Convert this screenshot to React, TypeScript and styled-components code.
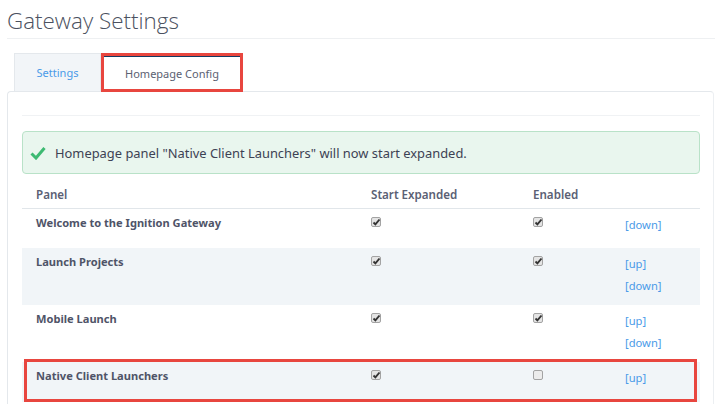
import React from "react";
import styled, { createGlobalStyle } from "styled-components";

const GlobalStyle = createGlobalStyle`
  html, body {
    margin: 0;
    padding: 0;
    background: #fff;
    overflow: hidden;
  }
  body {
    font-family: "Noto Sans", "Open Sans", sans-serif;
    font-size: 12px;
    color: #4f5468;
  }
`;

const Page = styled.div`
  position: relative;
  width: 715px;
  height: 404px;
  overflow: hidden;
  padding-left: 7px;
  box-sizing: border-box;
`;

const Title = styled.h1`
  margin: 0;
  height: 39px;
  padding-top: 6px;
  box-sizing: border-box;
  border-bottom: 1px solid #eef0f2;
  font-size: 22.4px;
  line-height: 29px;
  font-weight: 300;
  font-family: "Open Sans", sans-serif;
  color: #4b5160;
`;

const Tabs = styled.div`
  display: flex;
  margin: 14px 0 0 7px;
  height: 39px;
`;

const Tab = styled.div<{ $active?: boolean }>`
  display: flex;
  align-items: center;
  justify-content: center;
  box-sizing: border-box;
  margin-top: ${(p) => (p.$active ? "3px" : "0")};
  padding-bottom: ${(p) => (p.$active ? "3px" : "0")};
  height: ${(p) => (p.$active ? "36px" : "38px")};
  width: ${(p) => (p.$active ? "142px" : "87px")};
  font-size: 11px;
  color: ${(p) => (p.$active ? "#5b6172" : "#4a9ae8")};
  background: ${(p) => (p.$active ? "#fff" : "#f2f5f8")};
  border: 1px solid #e4e8ec;
  border-bottom: none;
  border-top: ${(p) => (p.$active ? "1px solid #123a63" : "1px solid #e4e8ec")};
  position: relative;
  z-index: 1;
`;

const Panel = styled.div`
  margin-top: -1px;
  width: 707px;
  height: 330px;
  box-sizing: border-box;
  padding: 23px 13px 0 14px;
  border: 1px solid #e4e8ec;
  border-right-color: #eceff2;
  border-radius: 4px 4px 0 0;
`;

const Rule = styled.div`
  border-top: 1px solid #f0f2f4;
  margin-bottom: 15px;
`;

const Alert = styled.div`
  display: flex;
  align-items: center;
  gap: 9px;
  height: 43px;
  box-sizing: border-box;
  padding-left: 7px;
  background: #e9f6ee;
  border: 1px solid #b9e2c8;
  border-radius: 4px;
  font-size: 12.9px;
  color: #3d4254;
`;

const Table = styled.table`
  width: 678px;
  margin-top: 12px;
  border-collapse: collapse;
  table-layout: fixed;
`;

const Head = styled.th<{ $w: number }>`
  width: ${(p) => p.$w}px;
  height: 22px;
  padding: 0 0 0 14px;
  box-sizing: border-box;
  text-align: left;
  vertical-align: top;
  font-size: 11.6px;
  line-height: 17px;
  font-weight: 600;
  color: #5a6074;
  border-bottom: 1px solid #e1e6ea;
`;

const Row = styled.tr<{ $shaded?: boolean; $h: number }>`
  height: ${(p) => p.$h}px;
  background: ${(p) => (p.$shaded ? "#f1f5f8" : "#fff")};
`;

const Cell = styled.td`
  padding: 5px 0 0 14px;
  vertical-align: top;
`;

const Name = styled.span`
  font-size: 11.1px;
  line-height: 17px;
  font-weight: 700;
  color: #4f5468;
`;

const MoveLink = styled.a`
  display: block;
  width: fit-content;
  font-size: 11.2px;
  line-height: 22px;
  color: #4a9ae8;
`;

const Check = styled.span<{ $on?: boolean }>`
  display: block;
  width: 10px;
  height: 10px;
  box-sizing: border-box;
  margin-top: 3px;
  border: 1px solid #a3a3a3;
  border-radius: 2px;
  background: ${(p) => (p.$on ? "#e4e4e4" : "#ececec")};
  position: relative;

  svg {
    position: absolute;
    left: 0;
    top: -1px;
  }
`;

const Highlight = styled.div<{ $x: number; $y: number; $w: number; $h: number }>`
  position: absolute;
  left: ${(p) => p.$x}px;
  top: ${(p) => p.$y}px;
  width: ${(p) => p.$w}px;
  height: ${(p) => p.$h}px;
  box-sizing: border-box;
  border: 3px solid #e8463f;
  z-index: 2;
`;

const CheckBox = ({ on }: { on?: boolean }) => (
  <Check $on={on}>
    {on && (
      <svg width="9" height="10" viewBox="0 0 9 10">
        <path d="M1.5 5.5 L3.4 7.4 L7.5 2.5" fill="none" stroke="#333" strokeWidth="1.9" />
      </svg>
    )}
  </Check>
);

const rows = [
  { name: "Welcome to the Ignition Gateway", on: true, links: ["[down]"], h: 40 },
  { name: "Launch Projects", on: true, links: ["[up]", "[down]"], h: 57, shaded: true },
  { name: "Mobile Launch", on: true, links: ["[up]", "[down]"], h: 57 },
  { name: "Native Client Launchers", on: false, links: ["[up]"], h: 40, shaded: true },
];

export default function App() {
  return (
    <Page>
      <GlobalStyle />
      <Title>Gateway Settings</Title>
      <Tabs>
        <Tab>Settings</Tab>
        <Tab $active>Homepage Config</Tab>
      </Tabs>
      <Panel>
        <Rule />
        <Alert>
          <svg width="16" height="14" viewBox="0 0 16 14">
            <path d="M1.5 7.5 L6 12 L14.5 2" fill="none" stroke="#3dba72" strokeWidth="3" />
          </svg>
          Homepage panel "Native Client Launchers" will now start expanded.
        </Alert>
        <Table>
          <thead>
            <tr>
              <Head $w={335}>Panel</Head>
              <Head $w={162}>Start Expanded</Head>
              <Head $w={92}>Enabled</Head>
              <Head $w={89} />
            </tr>
          </thead>
          <tbody>
            {rows.map((r) => (
              <Row key={r.name} $h={r.h} $shaded={r.shaded}>
                <Cell>
                  <Name>{r.name}</Name>
                </Cell>
                <Cell>
                  <CheckBox on />
                </Cell>
                <Cell>
                  <CheckBox on={r.on} />
                </Cell>
                <Cell>
                  {r.links.map((l) => (
                    <MoveLink key={l}>{l}</MoveLink>
                  ))}
                </Cell>
              </Row>
            ))}
          </tbody>
        </Table>
      </Panel>
      <Highlight $x={101} $y={53} $w={142} $h={39} />
      <Highlight $x={24} $y={359} $w={673} $h={43} />
    </Page>
  );
}
